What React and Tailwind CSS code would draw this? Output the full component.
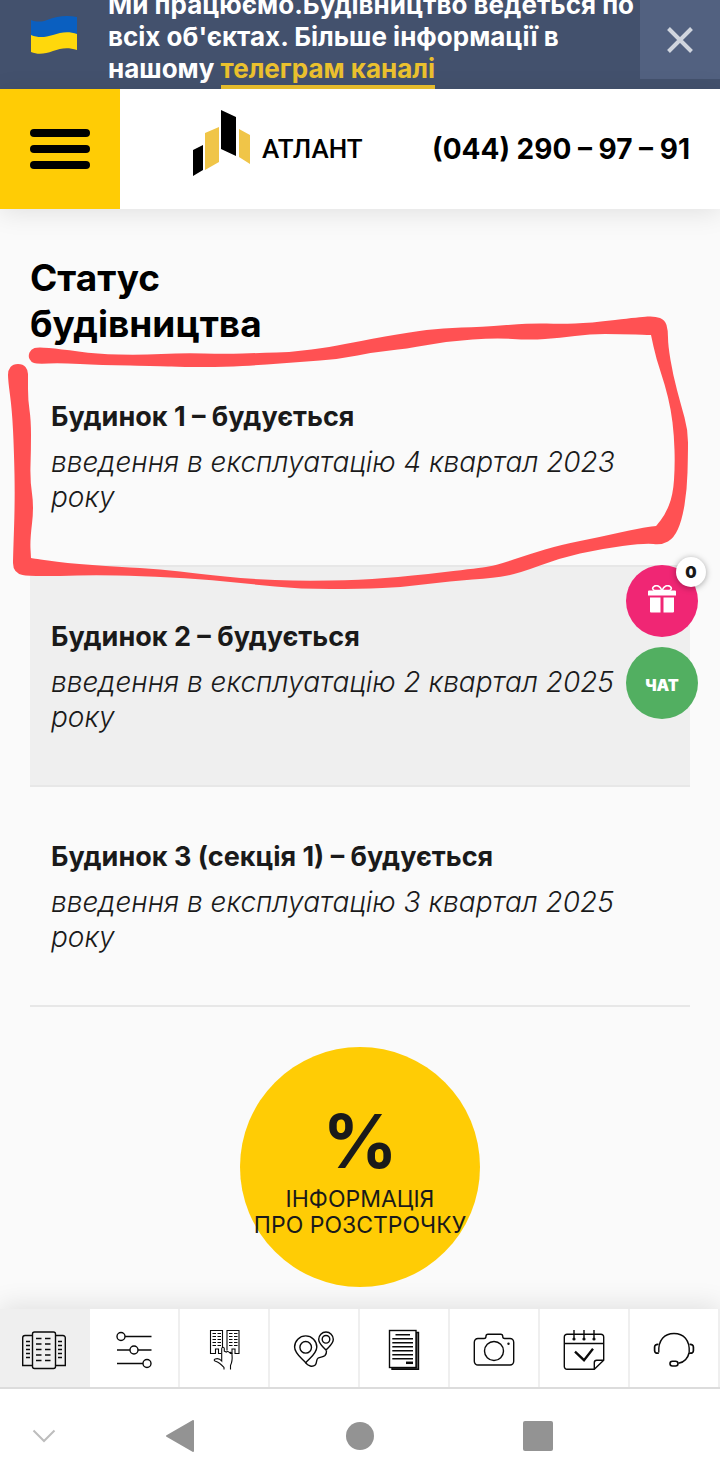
import { useState } from 'react';

const houses = [
  { id: 1, title: 'Будинок 1 – будується', term: 'введення в експлуатацію 4 квартал 2023 року' },
  { id: 2, title: 'Будинок 2 – будується', term: 'введення в експлуатацію 2 квартал 2025 року' },
  { id: 3, title: 'Будинок 3 (секція 1) – будується', term: 'введення в експлуатацію 3 квартал 2025 року' },
];

// --- HAND DRAWN MARKER ---

const marker = [
  [38, 347], [60, 349], [97, 354], [140, 355], [183, 353], [225, 354], [260, 353], [293, 352], [330, 347], [360, 341],
  [410, 332], [443, 328], [480, 327], [533, 323], [560, 324], [590, 323], [640, 317], [655, 316], [665, 320], [668, 330],
  [668, 345], [673, 375], [681, 405], [688, 430], [688, 455], [687, 490], [682, 520], [674, 538], [662, 545], [645, 543],
  [600, 549], [560, 558], [520, 573], [495, 578], [450, 581], [405, 587], [360, 589], [300, 589], [250, 584], [200, 579],
  [140, 576], [95, 575], [60, 576], [27, 576], [18, 574], [13, 568], [13, 558], [15, 500], [14, 450], [12, 410], [8, 380],
  [8, 370], [13, 364], [23, 364], [28, 370], [28, 378], [28, 400], [31, 420], [31, 450], [30, 480], [34, 507], [30, 540],
  [31, 558], [31, 558], [65, 563], [120, 567], [160, 569], [200, 574], [250, 579], [300, 581], [360, 580], [410, 576],
  [480, 568], [497, 565], [530, 554], [560, 545], [600, 537], [640, 528], [656, 526], [656, 526], [665, 515], [673, 495],
  [675, 465], [674, 435], [671, 410], [665, 385], [656, 358], [651, 335], [651, 335], [620, 334], [590, 334], [560, 338],
  [530, 340], [495, 338], [450, 341], [405, 349], [375, 352], [340, 359], [300, 362], [260, 365], [225, 367], [183, 367],
  [160, 366], [100, 365], [60, 363], [37, 364], [31, 362], [28, 356], [31, 349],
];

// Smooth closed outline: curves run between the midpoints of the segments
function smooth(points) {
  const mid = (a, b) => `${(a[0] + b[0]) / 2} ${(a[1] + b[1]) / 2}`;
  let d = `M${mid(points[points.length - 1], points[0])}`;
  points.forEach((p, i) => {
    d += `Q${p[0]} ${p[1]} ${mid(p, points[(i + 1) % points.length])}`;
  });
  return d + 'Z';
}

function Marker() {
  return (
    <svg viewBox="0 0 720 600" className="pointer-events-none absolute left-0 top-0 z-10 h-[600px] w-[720px]" aria-hidden="true">
      <path d={smooth(marker)} fill="#ff5153" />
    </svg>
  );
}

// --- ICONS ---

function Icon({ children }) {
  return (
    <svg viewBox="0 0 44 44" className="size-11" fill="none" stroke="#0a0a0a" strokeWidth="1.4" aria-hidden="true">
      {children}
    </svg>
  );
}

function HousesIcon() {
  return (
    <Icon>
      <rect x="10.5" y="4" width="23" height="36.5" rx="2" />
      <path d="M10.5 7.5H3a2.3 2.3 0 0 0-2.3 2.3v27.7h9.8M33.5 7.5H41a2.3 2.3 0 0 1 2.3 2.3v27.7h-9.8" />
      <path d="M14 10.5h5.5M23 10.5h5.5M14 16h5.5M23 16h5.5M14 21.5h5.5M23 21.5h5.5M14 27h5.5M23 27h5.5M14 32.5h5.5M23 32.5h5.5" />
      <path d="M4 13.5h4M4 17.5h4M4 21.5h4M4 25.5h4M4 29.5h4M36 13.5h4M36 17.5h4M36 21.5h4M36 25.5h4M36 29.5h4" />
    </Icon>
  );
}

function SlidersIcon() {
  return (
    <Icon>
      <circle cx="9" cy="8.5" r="4" />
      <circle cx="22" cy="22" r="4" />
      <circle cx="35" cy="35.5" r="4" />
      <path d="M13 8.5h26.5M5 22h13M26 22h13.5M5 35.5h26" />
    </Icon>
  );
}

function ChooseIcon() {
  return (
    <Icon>
      <g strokeWidth="1.1">
        <path d="M20.5 20V2.500h-12v23h5V21h3v4.500h3" />
        <path d="M25 22.500V2.500h12v23h-4V21h-3v4.500h-2" />
        <path d="M10.500 5.500h3.500M15.500 5.500h3.500M10.500 8.500h3.500M15.500 8.500h3.500M10.500 11.500h3.500M15.500 11.500h3.500M10.500 14.500h3.500M15.500 14.500h3.500M10.500 17.500h3.500M15.500 17.500h3.500" />
        <path d="M27 5.500h3.500M32 5.500h3.500M27 8.500h3.500M32 8.500h3.500M27 11.500h3.500M32 11.500h3.500M27 14.500h3.500M32 14.500h3.500M27 17.500h3.500M32 17.500h3.500" />
        <path d="M28.500 41.500v-4c1.500-3 2-6 1.500-11 0-2-1.500-2.500-2.500-1.800-1-1.500-2.400-1.400-3.200-.7l-2-.8V20.500c-.3-1.600-2.300-1.600-2.600 0V33c-2-2.500-5-2.500-6.500-2-1.600.8-1 2 .3 2.300 4 1.200 6 3.500 8.500 6.200v2" />
      </g>
    </Icon>
  );
}

function RouteIcon() {
  return (
    <Icon>
      <path d="M13.700 34.700C9 29.500 2.600 25.500 2.600 19a11.100 11.100 0 0 1 22.200 0c0 6.500-6.400 10.500-11.100 15.700Z" />
      <circle cx="13.700" cy="19.300" r="5.800" />
      <path d="M34 22c-3-3.500-7.300-6-7.300-10.700a7.300 7.300 0 0 1 14.600 0C41.300 16 37 18.500 34 22Z" />
      <circle cx="34" cy="11.300" r="3.800" />
      <path d="M13.700 34.700c2 3.500 7 4.600 9.500 2.300 2.300-2.500.5-5.500 3-7 2-1.200 5-.7 6.800-2.500 1.300-1.500 1.600-3 1.500-5" />
    </Icon>
  );
}

function DocsIcon() {
  return (
    <Icon>
      <path d="M10 39.500V41.300h26.500V4.500H34v35Z" fill="#777" />
      <rect x="7.500" y="2.500" width="26.500" height="37" fill="#fff" />
      <path d="M13.500 6.800h14.500M10.300 10.700H31M10.300 14.700H31M10.300 18.700H31M10.300 22.700H31M10.300 26.700H31M10.300 30.700H31" />
      <path d="M24 34.800h7" strokeWidth="2.500" />
    </Icon>
  );
}

function CameraIcon() {
  return (
    <Icon>
      <path d="M6 10.500h6q2 0 2-2.200 0-2 2-2h12.700q2 0 2 2 0 2.200 2 2.200H38a3.700 3.700 0 0 1 3.700 3.700v19.100A3.700 3.700 0 0 1 38 37H6a3.700 3.700 0 0 1-3.700-3.700V14.200A3.700 3.700 0 0 1 6 10.500Z" />
      <circle cx="22" cy="23" r="9.500" />
      <circle cx="36.500" cy="15.700" r="1.200" fill="#111" stroke="none" />
    </Icon>
  );
}

function CalendarIcon() {
  return (
    <Icon>
      <path d="M32.300 41.300H5a2.700 2.700 0 0 1-2.700-2.700V9A2.700 2.700 0 0 1 5 6.300h34A2.700 2.700 0 0 1 41.700 9v23.300ZM2.300 15.500h39.400" />
      <path d="M32.300 41.300v-6.600q0-2.400 2.400-2.400h7" />
      <path d="M12 2v9M22 2v9M32 2v9" />
      <g fill="#111" stroke="none">
        <circle cx="12" cy="11" r="1.600" />
        <circle cx="22" cy="11" r="1.600" />
        <circle cx="32" cy="11" r="1.600" />
      </g>
      <path d="m13 23.700 9 8.500 9-11.500" strokeWidth="2.300" />
    </Icon>
  );
}

function HeadsetIcon() {
  return (
    <Icon>
      <path d="M6.800 24.500C6 12 12.500 5.500 22 5.500S38 12 37.200 24.500" />
      <path d="M37.200 24.500C36 30 32 34.500 26.500 35.300" strokeWidth="1.600" />
      <path d="M6.500 16.500C4 16 2.600 17.500 2.600 19v3.500c0 2 1.400 3.200 4.200 2.500M37.500 16.500c2.500-.5 3.900 1 3.900 2.500v3.500c0 2-1.400 3.200-4.200 2.500" strokeWidth="1.700" />
      <rect x="18" y="33.200" width="8" height="4.800" rx="2.400" strokeWidth="1.600" />
    </Icon>
  );
}

function Flag() {
  return (
    <svg viewBox="31 16 46 38" className="h-[38px] w-[46px]" aria-hidden="true">
      <path d="M31 20c5 2 11 2 16 0 10-4 20-5 30-3v17c-8-2-15-1-23 2-8 2.500-15 3-23 .5Z" fill="#0a5fc0" />
      <path d="M31 35c7 3 14 2.500 22 0 8-3 16-4 24-1v16c-9-3-16-2-24 1-8 3-15 4-22 1Z" fill="#ffd80c" />
    </svg>
  );
}

function Logo() {
  return (
    <a href="#home" className="flex items-center gap-3" aria-label="Атлант">
      <svg viewBox="193 110 57 78" className="h-[78px] w-[57px]" aria-hidden="true">
        <path d="M193 150l10-5v25l-10 6ZM221 110l15 7v39l-15-7Z" fill="#000" />
        <path d="M205 133l14-6v35l-14 8ZM239 129l11 6v29l-11-7Z" fill="#f0c548" />
      </svg>
      <span className="font-[Roboto,'Liberation_Sans',sans-serif] text-[26px] font-medium leading-8 text-black">АТЛАНТ</span>
    </a>
  );
}

const tabs = [
  { id: 'houses', label: 'Будинки', icon: HousesIcon },
  { id: 'filter', label: 'Параметри', icon: SlidersIcon },
  { id: 'choose', label: 'Вибір квартири', icon: ChooseIcon },
  { id: 'route', label: 'Розташування', icon: RouteIcon },
  { id: 'docs', label: 'Документи', icon: DocsIcon },
  { id: 'photo', label: 'Фото', icon: CameraIcon },
  { id: 'visit', label: 'Запис', icon: CalendarIcon },
  { id: 'support', label: 'Підтримка', icon: HeadsetIcon },
];

export default function App() {
  const [tab, setTab] = useState('houses');

  return (
    <div className="relative flex min-h-screen flex-col overflow-hidden bg-[#fafafa] font-[Inter,'Liberation_Sans',sans-serif] text-[#1a1a1a]">
      {/* Announcement */}
      <div className="flex h-[89px] items-end overflow-hidden bg-[#43516d]">
        <div className="flex w-[108px] shrink-0 self-start pl-[31px] pt-4">
          <Flag />
        </div>
        <p className="min-w-0 flex-1 whitespace-nowrap text-[26px] font-bold leading-8 text-white">
          Ми працюємо.Будівництво ведеться по<br />
          всіх об'єктах. Більше інформації в<br />
          нашому <a href="#telegram" className="inline-block border-b-4 border-[#ebc12e] text-[#ebc12e]">телеграм каналі</a>
        </p>
        <button aria-label="Закрити" className="flex h-[79px] w-20 shrink-0 items-center justify-center self-start bg-[#526180]">
          <svg viewBox="0 0 26 26" className="size-[26px]" stroke="#d0d5de" strokeWidth="4" aria-hidden="true">
            <path d="M1.500 1.500l23 23M24.500 1.500l-23 23" />
          </svg>
        </button>
      </div>

      {/* Header */}
      <header className="flex h-[120px] items-center bg-white pr-[30px] shadow-[0_4px_24px_rgba(0,0,0,0.1)]">
        <button aria-label="Меню" className="mr-[73px] flex size-[120px] shrink-0 flex-col items-center justify-center gap-2 bg-[#ffcc05]">
          <span className="h-2 w-[60px] rounded-full bg-black" />
          <span className="h-2 w-[60px] rounded-full bg-black" />
          <span className="h-2 w-[60px] rounded-full bg-black" />
        </button>
        <Logo />
        <a href="tel:0442909791" className="ml-auto whitespace-nowrap text-[28px] font-bold text-black">(044) 290 – 97 – 91</a>
      </header>

      {/* Building status */}
      <main className="flex flex-1 flex-col px-[30px] pb-[22px] pt-[46px]">
        <h1 className="text-[37px] font-bold leading-[46px] text-black">
          Статус<br />будівництва
        </h1>
        <ul>
          {houses.map((house) => (
            <li key={house.id} className="border-b-2 border-[#e7e7e7] px-[21px] pb-[50px] pt-[53px] even:bg-[#efefef]">
              <h2 className="text-[27px] font-bold leading-[34px]">{house.title}</h2>
              <p className="mt-[11px] max-w-[570px] text-[28px] font-light italic leading-[35px]">{house.term}</p>
            </li>
          ))}
        </ul>
        <a href="#installment" className="mx-auto mt-10 flex size-60 flex-col items-center justify-center rounded-full bg-[#ffcc05] pt-1 text-center">
          <span className="text-[74px] font-bold leading-[80px]">%</span>
          <span className="mt-[5px] whitespace-nowrap text-[23px] leading-[26px]">ІНФОРМАЦІЯ<br />ПРО РОЗСТРОЧКУ</span>
        </a>
      </main>

      <Marker />

      {/* Floating buttons */}
      <div className="absolute right-[22px] top-[565px] z-20 flex flex-col gap-2.5">
        <button aria-label="Подарунки" className="relative flex size-[72px] items-center justify-center rounded-full bg-[#f02674] pb-1">
          <svg viewBox="0 0 28 28" className="size-7" fill="#fff" aria-hidden="true">
            <path d="M0 6.500Q0 5.500 1 5.500h26q1 0 1 1v4H0ZM2 12.500h10.500v15H3q-1 0-1-1ZM15.500 12.500H26v14q0 1-1 1h-9.500Z" />
            <path d="M14 5.500C12 1 8.500-.5 6 1.500 3.500 3 5 5.500 7 5.500ZM14 5.500C16 1 19.500-.5 22 1.500c2.500 1.500 1 4-1 4Z" fill="none" stroke="#fff" strokeWidth="1.600" />
          </svg>
          <span className="absolute -right-2 -top-2 flex size-[30px] items-center justify-center rounded-full bg-white text-[16px] font-black text-[#1a1a1a] shadow-[0_1px_6px_rgba(0,0,0,0.35)]">0</span>
        </button>
        <button className="flex size-[72px] items-center justify-center rounded-full bg-[#52af61] pt-1 text-[16px] font-black text-white">ЧАТ</button>
      </div>

      {/* Bottom tabs */}
      <nav className="grid h-20 grid-cols-8 border-b-2 border-[#dcdcdc] bg-white shadow-[0_-4px_24px_rgba(0,0,0,0.1)]">
        {tabs.map(({ id, label, icon: TabIcon }) => (
          <button
            key={id}
            aria-label={label}
            onClick={() => setTab(id)}
            className={tab === id ? 'flex items-center justify-center border-r-2 border-[#efefef] bg-[#efefef] pt-1' : 'flex items-center justify-center border-r-2 border-[#efefef] pt-1'}
          >
            <TabIcon />
          </button>
        ))}
      </nav>

      {/* System navigation */}
      <div className="grid h-[93px] grid-cols-[88fr_184fr_176fr_180fr_92fr] place-items-center bg-white">
        <button aria-label="Сховати">
          <svg viewBox="0 0 24 14" className="h-3.5 w-6" fill="none" stroke="#bdbdbd" strokeWidth="2" aria-hidden="true">
            <path d="M1.500 1.500 12 12 22.500 1.500" />
          </svg>
        </button>
        <button aria-label="Назад">
          <svg viewBox="0 0 28 32" className="h-8 w-7" fill="#939393" stroke="#939393" strokeWidth="2" strokeLinejoin="round" aria-hidden="true">
            <path d="M1 16 27 1v30Z" />
          </svg>
        </button>
        <button aria-label="Додому" className="size-7 rounded-full bg-[#939393]" />
        <button aria-label="Огляд" className="size-[30px] rounded-xs bg-[#939393]" />
      </div>
    </div>
  );
}
